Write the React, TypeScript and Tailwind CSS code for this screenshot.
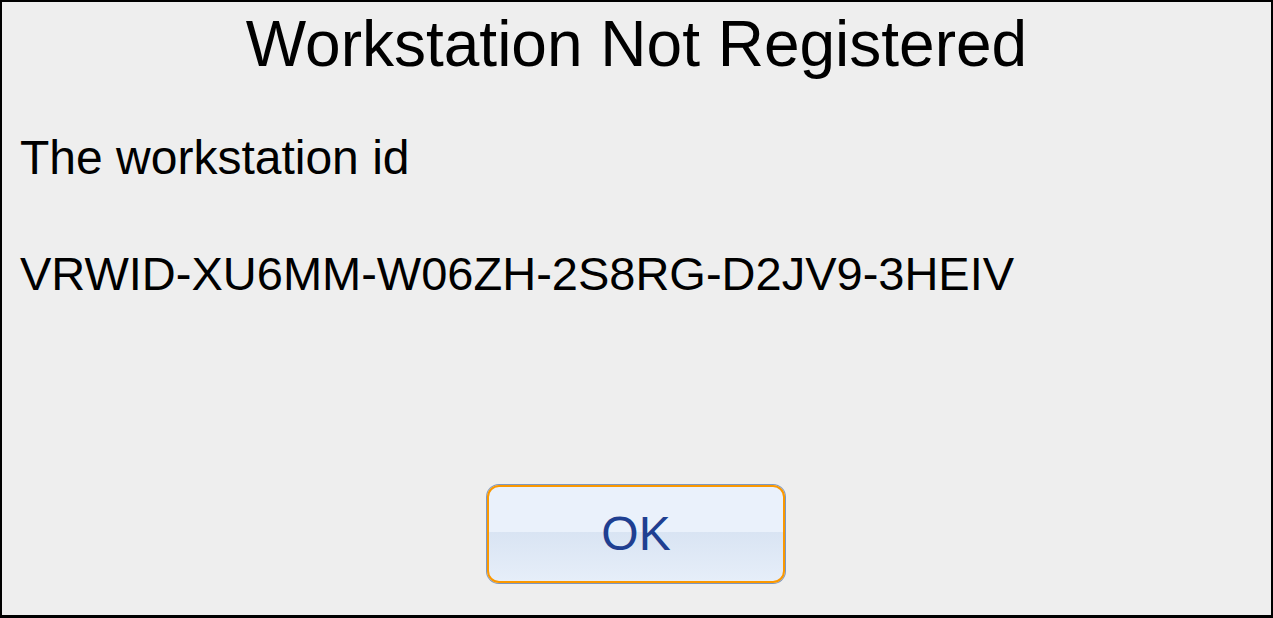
export default function App() {
  return (
    <div className="w-[1273px] h-[618px] bg-[#eeeeee] border-black border-t-2 border-l-2 border-r-2 border-b-[3px] flex flex-col font-['Liberation_Sans',Arial,sans-serif] text-black overflow-hidden">
      {/* title */}
      <h1 className="pt-[10px] text-center text-[64px] leading-[64px] font-normal">
        Workstation Not Registered
      </h1>

      {/* message */}
      <div className="pl-[18px] leading-[48px]">
        <p className="mt-[58px] text-[48px]">The workstation id</p>
        <p className="mt-[68px] text-[47px]">VRWID-XU6MM-W06ZH-2S8RG-D2JV9-3HEIV</p>
      </div>

      {/* button */}
      <div className="flex justify-center mt-[187px] pr-[1px]">
        <button className="w-[298px] h-[98px] rounded-[12px] border-2 border-[#fb9800] shadow-[0_0_0_1px_#7d97bf] bg-[linear-gradient(to_bottom,#eaf1fb_0%,#eaf1fb_48%,#d9e4f3_48%,#e6eef9_100%)] flex items-center justify-center text-[48px] leading-none text-[#1f3f91]">
          OK
        </button>
      </div>
    </div>
  )
}
